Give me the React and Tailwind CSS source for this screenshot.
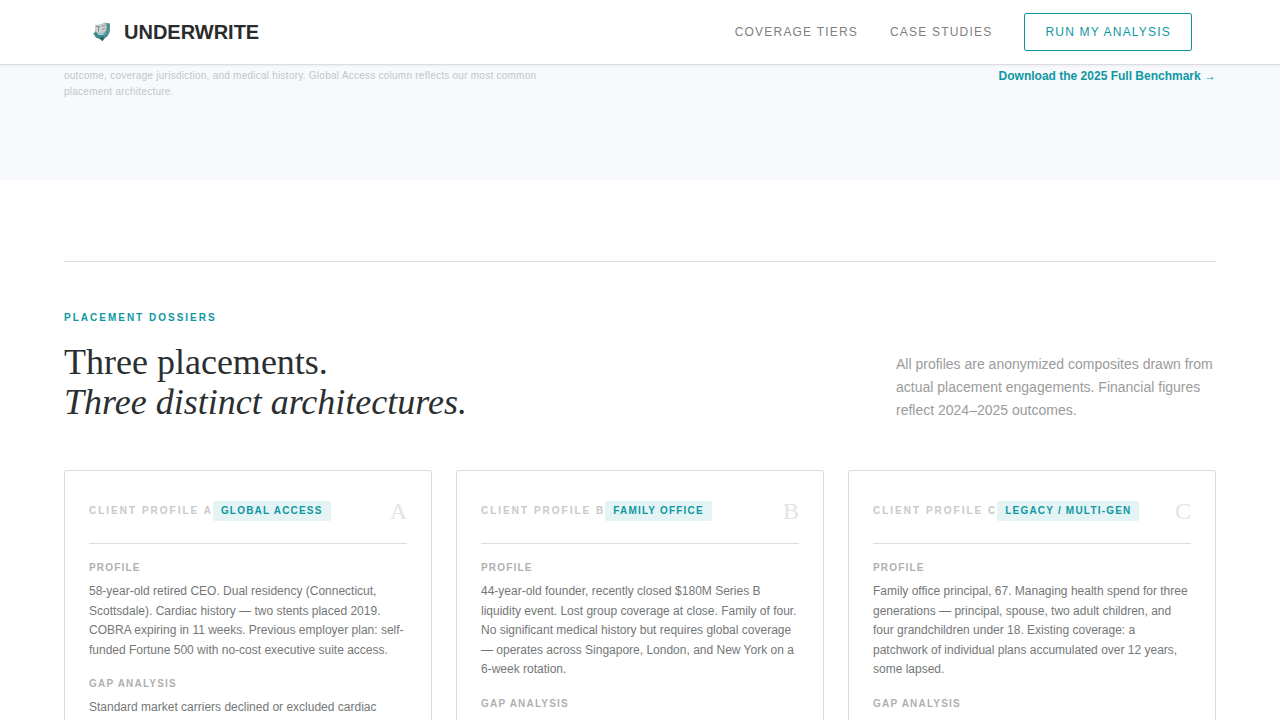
const profiles = [
  {
    letter: "A",
    tier: "Global Access",
    profile:
      "58-year-old retired CEO. Dual residency (Connecticut, Scottsdale). Cardiac history — two stents placed 2019. COBRA expiring in 11 weeks. Previous employer plan: self-funded Fortune 500 with no-cost executive suite access.",
    gap: "Standard market carriers declined or excluded cardiac",
  },
  {
    letter: "B",
    tier: "Family Office",
    profile:
      "44-year-old founder, recently closed $180M Series B liquidity event. Lost group coverage at close. Family of four. No significant medical history but requires global coverage — operates across Singapore, London, and New York on a 6-week rotation.",
  },
  {
    letter: "C",
    tier: "Legacy / Multi-Gen",
    profile:
      "Family office principal, 67. Managing health spend for three generations — principal, spouse, two adult children, and four grandchildren under 18. Existing coverage: a patchwork of individual plans accumulated over 12 years, some lapsed.",
  },
];

function Logo() {
  return (
    <svg viewBox="0 0 28 28" className="size-7" aria-hidden="true">
      <defs>
        <linearGradient id="shell" x1="0" y1="0" x2="1" y2="1">
          <stop offset="0" stopColor="#c9cfd0" />
          <stop offset="0.5" stopColor="#8fb0b2" />
          <stop offset="1" stopColor="#1f6b72" />
        </linearGradient>
      </defs>
      <path d="M7 7 12 6.500 17 4.500 21.500 5.500 22 8 21.500 14 19.500 18 16.500 20.500 14.500 23 12 21 8 19.500 5.500 16 7 13Z" fill="url(#shell)" />
      <path d="M18.500 5 21.500 5.500 22 8 21.500 14 19.500 18 16 20.500 18 15 19 10Z" fill="#4a9196" />
      <path d="M7 8 17.500 5.500 18.500 11 16 15 8 14Z" fill="#cdd1d1" />
      <path d="M8 8.500h4.500M10.500 8.500v5M14 8.500l3-1.500M14 12l3-2" stroke="#858d8e" strokeWidth="1" fill="none" />
      <path d="M5.500 15.500 8 14 11 17 17 17.500 14.500 23 12 21 8 19.500Z" fill="#3c868c" />
      <path d="M8 13.500 13 14.500 16.500 13 15 17 10.500 17Z" fill="#a9cacb" />
      <path d="M12 20 16 19 14.500 23Z" fill="#285158" />
    </svg>
  );
}

function FieldLabel({ children }) {
  return (
    <h4 className="mb-1.5 text-[10px] leading-4 font-bold tracking-[0.12em] text-[#b0b0b0] uppercase">
      {children}
    </h4>
  );
}

function ProfileCard({ letter, tier, profile, gap }) {
  return (
    <article className="rounded-xs border border-[#dcdedf] p-6">
      <header className="mb-4 flex items-center justify-between border-b border-[#dcdedf] pb-4">
        <div className="flex items-center">
          <h3 className="text-[10px] leading-4 font-bold tracking-[0.2em] text-[#c8c8c8] uppercase">
            Client Profile {letter}
          </h3>
          <span className="rounded-xs bg-[#e4f4f5] px-2 py-0.5 text-[10px] leading-4 font-bold tracking-[0.12em] text-[#0e97a3] uppercase">
            {tier}
          </span>
        </div>
        <span className="font-['Liberation_Serif',serif] text-2xl text-[#e2e4e5]">{letter}</span>
      </header>
      <FieldLabel>Profile</FieldLabel>
      <p className="mb-4 text-xs leading-relaxed text-[#747777]">{profile}</p>
      <FieldLabel>Gap Analysis</FieldLabel>
      {gap && <p className="text-xs leading-relaxed text-[#747777]">{gap}</p>}
    </article>
  );
}

export default function App() {
  return (
    <div className="bg-white font-['Liberation_Sans',Arial,sans-serif] text-[#2a2f31]">
      <header className="sticky top-0 z-10 border-b border-[#d9dde0] bg-white shadow-xs">
        <div className="mx-auto flex h-16 items-center justify-between px-[88px]">
          <a href="#top" className="flex items-center gap-2 text-xl font-bold text-[#2a2b2c]">
            <Logo />
            UNDERWRITE
          </a>
          <nav className="flex items-center gap-8 text-xs tracking-widest text-[#808080] uppercase">
            <a href="#tiers">Coverage Tiers</a>
            <a href="#cases">Case Studies</a>
            <button
              type="button"
              className="rounded-xs border border-[#0e97a3] px-5 py-2.5 tracking-widest text-[#0e97a3] uppercase"
            >
              Run My Analysis
            </button>
          </nav>
        </div>
      </header>

      <main>
        <section className="bg-[#f7f9fd] px-16 pt-[3px] pb-20">
          <div className="flex items-start justify-between">
            <p className="max-w-lg text-[10px] leading-4 tracking-wide text-[#c2c5c7]">
              outcome, coverage jurisdiction, and medical history. Global Access column reflects our most common
              placement architecture.
            </p>
            <a href="#benchmark" className="text-xs leading-4 font-bold text-[#0e97a3]">
              Download the 2025 Full Benchmark →
            </a>
          </div>
        </section>

        <section className="px-16 pt-[81px] pb-20">
          <div className="border-t border-[#dcdedf] pt-12">
            <p className="mb-4 text-[10px] leading-4 font-bold tracking-[0.2em] text-[#0e97a3] uppercase">
              Placement Dossiers
            </p>
            <div className="mb-12 flex items-end justify-between">
              <h2 className="font-['Liberation_Serif',serif] text-4xl">
                Three placements.
                <br />
                <em>Three distinct architectures.</em>
              </h2>
              <p className="max-w-xs text-sm leading-[23px] text-[#9b9b9b]">
                All profiles are anonymized composites drawn from actual placement engagements. Financial figures
                reflect 2024–2025 outcomes.
              </p>
            </div>
            <div className="grid grid-cols-3 gap-6">
              {profiles.map((p) => (
                <ProfileCard key={p.letter} {...p} />
              ))}
            </div>
          </div>
        </section>
      </main>
    </div>
  );
}
